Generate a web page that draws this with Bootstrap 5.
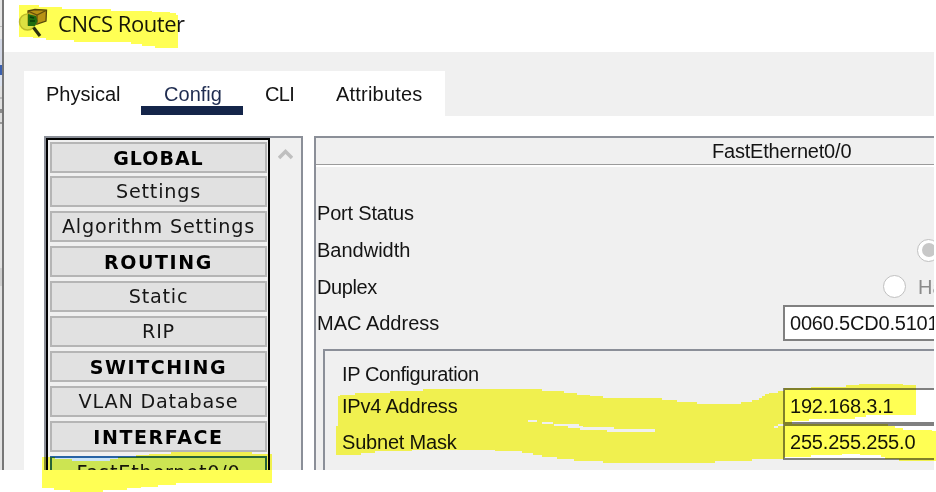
<!DOCTYPE html>
<html lang="en">
<head>
<meta charset="utf-8">
<meta name="viewport" content="width=device-width, initial-scale=1">
<title>CNCS Router</title>
<link href="https://cdn.jsdelivr.net/npm/bootstrap@5.3.0/dist/css/bootstrap.min.css" rel="stylesheet">
<style>
html,body{height:492px;overflow:hidden;background:#fff}
body{font:20px/24px "Liberation Sans",Arial,sans-serif;color:#141414}
.window-shot{width:934px;height:470px;background:#f0f0f0}
.desk-edge{width:4px;background:linear-gradient(#e6e6e6 0 26px,#bbb 26px 27px,#e8e8e8 27px 39px,#d3d8e6 39px 65px,#3a5fae 65px 75px,#dbe2f0 75px 86px,#e0e0e0 86px 97px,#bdbdbd 97px 99px,#e0e0e0 99px 109px,#8c8c8c 109px 113px,#dedede 113px 122px,#999 122px 124px,#e3e3e3 124px 268px,#d0d0d0 268px 286px,#e3e3e3 286px);border-right:2px solid #777}
.title-bar{height:52px;padding-left:54px;font:22px/46px "Open Sans","Segoe UI",sans-serif;color:#151515}
.title-bar span{letter-spacing:-.45px}
.work-area{padding-left:20px;padding-top:19px}
.tab-strip{width:421px;height:45px;padding-left:22px}
.tab-item{height:45px;padding-top:11px;white-space:nowrap}
.tab-item.current{width:102px;height:44px;border-bottom:9px solid #142549;color:#1f2c50;text-align:center;padding-left:2px}
.pane-body{height:354px;padding:20px 0 0 20px}
.side-panel{width:259px;height:340px;border:2px solid #8b8f98;background:#f0f0f0;overflow:hidden}
.side-list{width:224px;height:345px;border:2px solid #000;padding:1.500px 1px 0 2px;gap:3.9px;font:19.200px/28px "DejaVu Sans",Verdana,sans-serif;letter-spacing:.8px}
.side-item{height:31px;flex:none;border:2px solid #b5b5b5;background:#e1e1e1;text-align:center;white-space:nowrap;color:#161616;line-height:28px}
.side-item.head{font-weight:700;color:#000;font-size:19px;letter-spacing:1.600px}
.side-item.head.tight{letter-spacing:1px}
.side-item.picked{border-color:#2663a5;background:#cce4f7;line-height:29px}
.scroll-col{width:30px;padding:9px 0 0 8px}
.main-panel{margin-left:11px;width:620px;height:340px;border:2px solid #8b8f98;border-right:0;border-bottom:0;background:#f0f0f0;overflow:hidden}
.panel-title{height:27px;border-bottom:1.5px solid #9b9b9b;box-shadow:0 2px 0 #fff;padding-left:396px;line-height:27px;white-space:nowrap}
.form-line{height:36.7px;padding-left:1px;white-space:nowrap}
.value-box{width:151px;height:36px;border:2px solid #808080;border-right:0;background:#fff;padding-left:5px;line-height:33px;overflow:hidden}
.ip-group{margin-left:7px;margin-top:7px;height:130px;border:2px solid #8b8f98;border-right:0;border-bottom:0;padding-left:17px}
.radio-dot{width:23px;height:23px;border:1.5px solid #c0c0c0;border-radius:50%;background:#fff;flex:none}
.radio-dot i{width:14px;height:14px;border-radius:50%;background:#c8c8c8;flex:none}
.marker-layer{left:0;top:0;mix-blend-mode:multiply;pointer-events:none}
.app-icon{left:18px;top:6px}
.ls-a{letter-spacing:.2px}.ls-b{letter-spacing:-.7px}.ls-c{letter-spacing:-.2px}.ls-d{letter-spacing:-.4px}
</style>
<script src="https://cdn.jsdelivr.net/npm/bootstrap@5.3.0/dist/js/bootstrap.bundle.min.js"></script>
</head>
<body class="position-relative">
<div class="window-shot d-flex overflow-hidden">
  <div class="desk-edge flex-shrink-0"></div>
  <div class="flex-grow-1">
    <div class="title-bar bg-white"><span>CNCS Router</span></div>
    <div class="work-area">
      <div class="tab-strip bg-white d-flex">
        <div class="tab-item" style="width:95px">Physical</div>
        <div class="tab-item current">Config</div>
        <div class="tab-item ls-b" style="width:71px;padding-left:22px">CLI</div>
        <div class="tab-item ls-a" style="padding-left:22px">Attributes</div>
      </div>
      <div class="pane-body bg-white d-flex">
        <div class="side-panel d-flex flex-shrink-0">
          <div class="side-list d-flex flex-column flex-shrink-0">
            <div class="side-item head tight">GLOBAL</div>
            <div class="side-item">Settings</div>
            <div class="side-item">Algorithm Settings</div>
            <div class="side-item head">ROUTING</div>
            <div class="side-item">Static</div>
            <div class="side-item">RIP</div>
            <div class="side-item head">SWITCHING</div>
            <div class="side-item">VLAN Database</div>
            <div class="side-item head">INTERFACE</div>
            <div class="side-item picked">FastEthernet0/0</div>
          </div>
          <div class="scroll-col"><svg class="d-block" width="15" height="14"><path d="M1 11 7.500 4.500 14 11" fill="none" stroke="#bfbfbf" stroke-width="3.500"/></svg></div>
        </div>
        <div class="main-panel flex-shrink-0">
          <div class="panel-title ls-c">FastEthernet0/0</div>
          <div style="height:30px"></div>
          <div class="form-line d-flex align-items-center ls-c">Port Status</div>
          <div class="form-line d-flex align-items-center"><span class="flex-grow-1">Bandwidth</span><span class="radio-dot d-flex align-items-center justify-content-center" style="margin-right:-6px"><i></i></span></div>
          <div class="form-line d-flex align-items-center"><span class="flex-grow-1 ls-d">Duplex</span><span class="radio-dot"></span><span style="width:28px;padding-left:12px;color:#8b8b8b">Ha</span></div>
          <div class="form-line d-flex align-items-center"><span class="flex-grow-1">MAC Address</span><span class="value-box ls-c">0060.5CD0.5101</span></div>
          <div class="ip-group">
            <div class="ls-d" style="height:37px;line-height:47px">IP Configuration</div>
            <div class="d-flex" style="height:36px"><span class="flex-grow-1 ls-c" style="line-height:36px">IPv4 Address</span><span class="value-box ls-c">192.168.3.1</span></div>
            <div class="d-flex" style="height:36px"><span class="flex-grow-1 ls-c" style="line-height:37px">Subnet Mask</span><span class="value-box ls-c">255.255.255.0</span></div>
          </div>
        </div>
      </div>
    </div>
  </div>
</div>
<svg class="app-icon position-absolute" width="30" height="34">
  <path d="M10 5 17 3.500 28.500 4 28 15 19 18 10 19Z" fill="#b9923c" stroke="#56471d" stroke-width="1.300"/>
  <path d="M11 5.500 19 9 28 4.500M19 9V17" fill="none" stroke="#63501f" stroke-width="1.300"/>
  <circle cx="9.500" cy="16" r="8" fill="#c9cfa5" fill-opacity=".65" stroke="#bdbb78" stroke-width="1.500"/>
  <path d="M10 8 18 10 19.500 15 17 20 10 20Z" fill="#1f6b2c"/>
  <path d="M12 11 16 12M12 15 17 15" stroke="#093b16" stroke-width="1.500"/>
  <path d="M15.500 21.500 22 30" stroke="#2c3028" stroke-width="3.200"/>
</svg>
<!-- yellow marker strokes -->
<svg class="marker-layer position-absolute" width="936" height="492" fill="#ffff54">
  <path d="M19 5H39V7H62V9H111V11H152V12H170V13H176V15H178V48H155V46H142V44H131V42H74V40H46V38H33V37H19Z"/>
  <path d="M42 457H55V459H72V461H110V459H118V457H136V455H149V454H171V452H252V454H272V483H176V485H158V487H141V488H127V490H103V492H70V490H54V488H42Z"/>
  <path fill-rule="evenodd" d="M338 396H340V395H355V393H390V391H423V389H542V391H564V393H577V395H590V396H603V398H662V400H677V402H697V404H741V402H752V400H759V398H762V396H765V394H769V393H778V391H784V388H811V387H846V385H859V384H903V385H916V415H866V417H855V419H809V421H792V424H888V426H895V428H903V430H932V431H936V461H899V459H885V457H881V455H860V454H842V455H811V457H784V459H752V461H715V463H603V461H574V459H557V457H542V455H533V453H522V451H495V450H412V451H375V453H361V455H336V426H338ZM528 420V422H537V420ZM542 422V424H554V426H568V428H580V430H607V432H655V429H614V427H583V426H579V424H553V422ZM774 427V426H778V424H784V426H778V428H774Z"/>
</svg>
</body>
</html>
